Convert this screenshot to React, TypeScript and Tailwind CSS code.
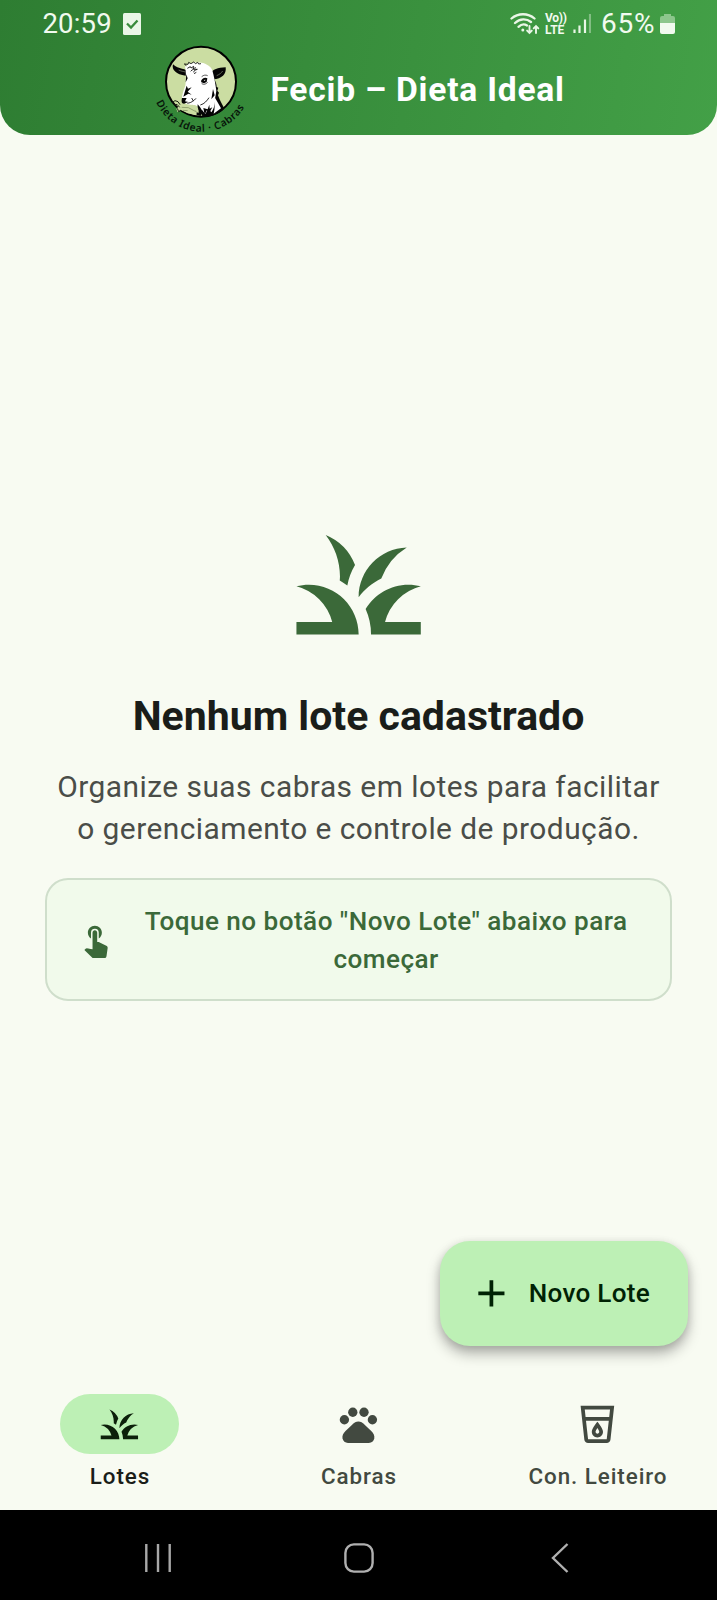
import { MdAdd, MdGrass, MdOutlineLocalDrink, MdTouchApp } from "react-icons/md";

function PawIcon({ className }: { className?: string }) {
  return (
    <svg viewBox="0 0 24 24" className={className} fill="currentColor">
      <circle cx="4.500" cy="9.500" r="2.500" />
      <circle cx="9" cy="5.500" r="2.500" />
      <circle cx="15" cy="5.500" r="2.500" />
      <circle cx="19.500" cy="9.500" r="2.500" />
      <path d="M12 10.500c1.300 0 2.200.7 3.200 1.600l3.700 3.500c1.200 1.200 1.900 2.500 1.600 4-.3 1.400-1.400 2.300-2.900 2.300H6.400c-1.500 0-2.600-.9-2.900-2.300-.3-1.500.4-2.800 1.600-4l3.700-3.500c1-.9 1.900-1.600 3.200-1.600z" />
    </svg>
  );
}

function GoatLogo() {
  return (
    <svg viewBox="15 12 300 270" className="h-[90px] w-[100px] shrink-0 overflow-visible">
      <circle cx="168" cy="122" r="105" fill="#cbdda2" stroke="#000" strokeWidth="6" />
      {/* right shoulder and neck */}
      <path d="M203 104c9 18 12 24 12 34l5 2-3 9 5 6-3 8c6 16 12 26 19 40-16 16-37 24-64 25l-14-24 30-60z" fill="#050505" />
      <path d="M207 166c6 10 16 26 21 36l-22 16c4-14 4-33 1-52z" fill="#fff" />
      {/* ears */}
      <path d="M84 70c-5 16 10 31 38 34l9-11c-6-11-31-7-47-23z" fill="#050505" />
      <path d="M101 87c8 4 14 4 20 6" fill="none" stroke="#8e957f" strokeWidth="2" />
      <path d="M196 98c7-14 22-17 46-19 3 20-12 35-37 36z" fill="#050505" />
      <path d="M215 104c9-4 14-8 18-14" fill="none" stroke="#8e957f" strokeWidth="2" />
      {/* head */}
      <path d="M124 75c3-8 12-10 20-9l5-3 5 3c16-5 41 5 48 22 5 20 9 36 12 62l-4 24c1 18-5 32-11 40l-9-11-9 16-10-12-7 8-4-17c-7-8-17-5-23-7-13-1-25-6-26-15-1-14 5-29 10-42 3-17 2-37 0-54-3-3 1-5 3-5z" fill="#fff" />
      <path d="M124 74l-6-5 11 1 2-6 7 4 8-5 6 5 6-4 3 5 7-1M127 82l9-5 2 4 8-5-2 7 9-3" fill="none" stroke="#050505" strokeWidth="2.500" />
      <path d="M137 91c5-7 10-6 20-6-5 2-11 3-11 9M147 98l7-4" fill="none" stroke="#050505" strokeWidth="2.500" />
      {/* eyes and muzzle */}
      <path d="M168 119c5-8 12-11 19-7l-2 11-8 4-8-3z" fill="#050505" />
      <path d="M176 117l6-1-3 4z" fill="#fff" />
      <path d="M170 107c6-5 12-6 18-3M170 128c8 4 13 1 18-4" fill="none" stroke="#050505" strokeWidth="2" />
      <path d="M124 100l-2 24 6-12M125 134l-10 33 15-9 10 3-12-9 12-13-11 4z" fill="#050505" />
      <path d="M111 171c-2 9-2 17 6 17l13-5-10-2 5-10z" fill="#050505" />
      <path d="M127 187c13-2 20-8 26-15M140 171l5 9M166 192c12-3 20-13 26-22" fill="none" stroke="#050505" strokeWidth="2.500" />
      <path d="M158 190c-2 12 6 17 2 27l-12-11 6 15 13 4 5-15-7-12zM175 201l4 20 7-14 3 16 13-24-8 4-1-12-5 14zM204 144l-5 31 10-12z" fill="#050505" />
      {/* leaf sprig */}
      <path d="M94 177l12 7 6 11 18 1 26 15-2 11-26-5-22-11-8 8-4-10 7-8-9-7z" fill="#cbdda2" />
      <path d="M82 184l8-5 9 3 6 9M88 192l8-2 8 9M97 202l4 10 7-4" fill="none" stroke="#1a2614" strokeWidth="3" />
      <path d="M110 199l20 1 25 13M114 208l14 1" fill="none" stroke="#59683f" strokeWidth="1.500" />
      <path id="logo-arc" d="M33 183A149 149 0 0 0 310 173" fill="none" />
      <text fontFamily="'Noto Sans', sans-serif" fontSize="31" fontWeight="600" fill="#07150a" textLength="326">
        <textPath href="#logo-arc" startOffset="1">Dieta Ideal · Cabras</textPath>
      </text>
    </svg>
  );
}

function WifiIcon() {
  return (
    <svg viewBox="0 0 30 24" className="h-[24px] w-[30px]" fill="none" stroke="#eaf6e7" strokeWidth="2.300" strokeLinecap="round">
      <path d="M1.500 6.500C8 .8 18 .8 24.500 6.500M5 11C10 6.300 16.500 6.300 21 10M8.500 14.800c3-2.800 6-2.900 8.500-1.300" />
      <circle cx="12.800" cy="18" r="1.500" fill="#eaf6e7" stroke="none" />
      <path d="M19.500 14v7m-2.400-2.400 2.400 2.400 2.300-2.400M26 21v-7m-2.300 2.400L26 14l2.300 2.400" strokeWidth="1.900" />
    </svg>
  );
}

function StatusBar() {
  return (
    <div className="flex h-[45px] items-center pt-[3px] pl-[42.500px] text-[#f1faef]">
      <span className="w-[80.500px] text-[27.500px] tracking-[0.150px]">20:59</span>
      <svg viewBox="0 0 18 22" className="h-[22px] w-[18px]">
        <rect width="18" height="22" rx="1.500" fill="#eaf6e7" />
        <path d="M4 10.500l4 4 6.500-7" fill="none" stroke="#388a3b" strokeWidth="2.300" />
      </svg>
      <div className="ml-auto flex items-center pr-[42px]">
        <WifiIcon />
        <div className="ml-[5px] flex w-[28px] flex-col text-[12px] leading-[12px] font-bold">
          <span className="tracking-[-0.300px]">Vo))</span>
          <span>LTE</span>
        </div>
        <svg viewBox="0 0 18 20" className="h-[20px] w-[18px]" strokeWidth="2.200" stroke="#eaf6e7">
          <path d="M1.500 15.500V19M6.500 11.500V19M12 5.500V19" />
          <path d="M17 0V19" opacity="0.400" />
        </svg>
        <span className="ml-[10px] w-[54px] text-[28px] tracking-[0.800px]">65%</span>
        <svg viewBox="0 0 15 22" className="ml-[5px] h-[22px] w-[15px]">
          <path d="M4 1h7v2h2a2 2 0 0 1 2 2v5H0V5a2 2 0 0 1 2-2h2z" fill="#8cc68c" />
          <path d="M0 10h15v9a2 2 0 0 1-2 2H2a2 2 0 0 1-2-2z" fill="#f1faef" />
        </svg>
      </div>
    </div>
  );
}

function Header() {
  return (
    <header className="h-[134.500px] shrink-0 rounded-b-[30px] bg-[linear-gradient(100.600deg,#2e7d32,#43a047)]">
      <StatusBar />
      <div className="flex h-[89.500px] items-center pl-[150px]">
        <GoatLogo />
        <h1 className="ml-[20.500px] text-[33.600px] font-bold tracking-[0.770px] whitespace-nowrap text-white">Fecib – Dieta Ideal</h1>
      </div>
    </header>
  );
}

function EmptyState() {
  return (
    <main className="flex h-[1106.500px] shrink-0 flex-col items-center px-[45px] pt-[375px] text-center">
      <MdGrass className="size-[149.300px] shrink-0 text-[#3b6939]" />
      <h2 className="mt-[31px] text-[41px] leading-[52px] font-bold whitespace-nowrap text-[#1a1d19]">Nenhum lote cadastrado</h2>
      <p className="mt-[24px] text-[29.900px] leading-[41.800px] tracking-[0.460px] whitespace-nowrap text-[#4a4d48]">
        Organize suas cabras em lotes para facilitar
        <br />o gerenciamento e controle de produção.
      </p>
      <div className="mt-[28.800px] flex h-[123px] w-[627px] items-center rounded-[23px] border-2 border-[#cfdecb] bg-[#f1faeb] px-[30px]">
        <MdTouchApp className="size-[37.300px] shrink-0 text-[#3b6939]" />
        <p className="ml-[18px] flex-1 text-[26.100px] leading-[38px] font-medium tracking-[0.470px] whitespace-nowrap text-[#3b6939]">
          Toque no botão "Novo Lote" abaixo para
          <br />
          começar
        </p>
      </div>
    </main>
  );
}

const tabs = [
  { label: "Lotes", Icon: MdGrass, active: true },
  { label: "Cabras", Icon: PawIcon, active: false },
  { label: "Con. Leiteiro", Icon: MdOutlineLocalDrink, active: false },
];

export default function App() {
  return (
    <div className="flex h-[1600px] w-[717px] flex-col overflow-hidden bg-[#f8fbf2] font-[Roboto,sans-serif]">
      <Header />
      <EmptyState />
      <button className="mr-[29.500px] flex h-[105px] w-[248px] shrink-0 items-center self-end rounded-[30px] bg-[#bdf0b5] pl-[29.500px] text-[#002204] shadow-[0_8px_14px_rgba(0,0,0,0.28),0_2px_8px_rgba(0,0,0,0.12)]">
        <MdAdd className="size-[44.800px]" />
        <span className="ml-[15px] text-[26.100px] font-medium tracking-[0.270px] whitespace-nowrap">Novo Lote</span>
      </button>
      <nav className="mt-[48px] grid h-[116px] shrink-0 grid-cols-3">
        {tabs.map(({ label, Icon, active }) => (
          <div key={label} className="flex flex-col items-center">
            <div className={active ? "flex h-[60px] w-[119px] items-center justify-center rounded-full bg-[#bdf0b5] text-[#0c1f0a]" : "flex h-[60px] w-[119px] items-center justify-center text-[#424940]"}>
              <Icon className="size-[44.800px]" />
            </div>
            <span className={active ? "mt-[7px] ml-px text-[22.400px] leading-[30px] font-medium tracking-[0.930px] text-[#1a1d19]" : "mt-[7px] ml-px text-[22.400px] leading-[30px] font-medium tracking-[0.930px] whitespace-nowrap text-[#424940]"}>
              {label}
            </span>
          </div>
        ))}
      </nav>
      <footer className="flex h-[90px] shrink-0 items-center bg-black pt-[6px] pl-[144px]">
        <svg viewBox="0 0 28 30" className="h-[30px] w-[28px]" stroke="#a8a8a8" strokeWidth="2.400">
          <path d="M2.300 1v28M14 1v28M25.700 1v28" />
        </svg>
        <svg viewBox="0 0 30 30" className="ml-[171.500px] size-[30px]" fill="none" stroke="#b0b0b0" strokeWidth="2.400">
          <rect x="1.400" y="1.400" width="27.200" height="27.200" rx="8.500" />
        </svg>
        <svg viewBox="0 0 18 30" className="ml-[177px] h-[30px] w-[18px]" fill="none" stroke="#b0b0b0" strokeWidth="2.400">
          <path d="M16.500 1 2 15l14.500 14" />
        </svg>
      </footer>
    </div>
  );
}
